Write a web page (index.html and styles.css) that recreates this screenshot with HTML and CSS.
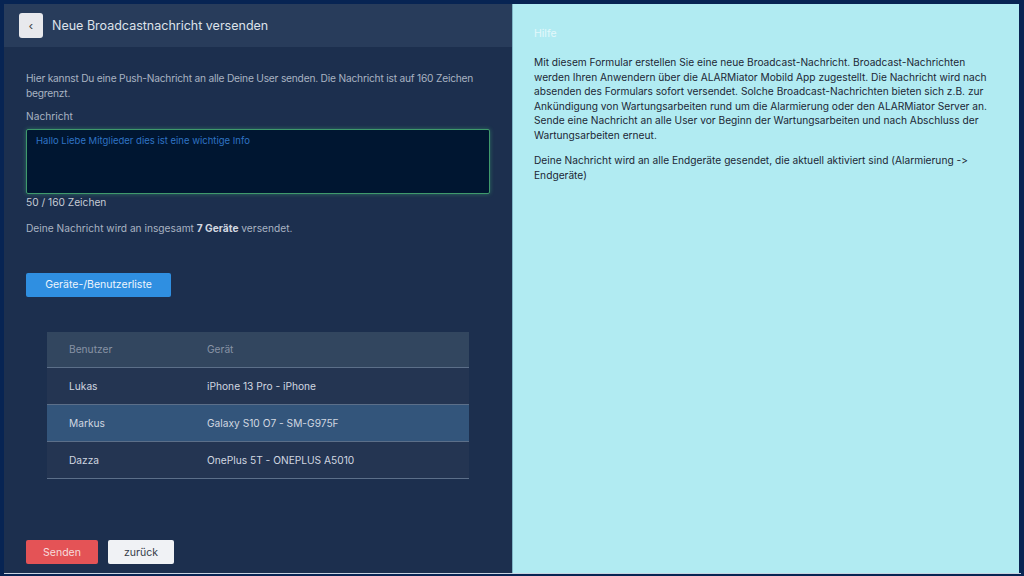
FILE: index.html
```html
<!DOCTYPE html>
<html lang="de">
<head>
    <meta charset="UTF-8">
    <meta name="viewport" content="width=device-width, initial-scale=1.0">
    <title>Broadcastnachricht</title>
    <link rel="stylesheet" href="styles.css">
</head>
<body>
    <div class="frame">
        <div class="main">
            <div class="header">
                <button class="back-btn" type="button">&lsaquo;</button>
                <h1>Neue Broadcastnachricht versenden</h1>
            </div>
            <div class="content">
                <p class="intro">Hier kannst Du eine Push-Nachricht an alle Deine User senden. Die Nachricht ist auf 160 Zeichen begrenzt.</p>
                <label class="field-label" for="message">Nachricht</label>
                <textarea id="message" placeholder="Hallo Liebe Mitglieder dies ist eine wichtige Info"></textarea>
                <p class="counter">50 / 160 Zeichen</p>
                <p class="summary">Deine Nachricht wird an insgesamt <b>7 Geräte</b> versendet.</p>
                <button class="btn btn-blue" type="button">Geräte-/Benutzerliste</button>
                <table class="devices">
                    <thead>
                        <tr><th>Benutzer</th><th>Gerät</th></tr>
                    </thead>
                    <tbody>
                        <tr><td>Lukas</td><td>iPhone 13 Pro - iPhone</td></tr>
                        <tr class="active"><td>Markus</td><td>Galaxy S10 O7 - SM-G975F</td></tr>
                        <tr><td>Dazza</td><td>OnePlus 5T - ONEPLUS A5010</td></tr>
                    </tbody>
                </table>
                <div class="actions">
                    <button class="btn btn-red" type="button">Senden</button>
                    <button class="btn btn-light" type="button">zurück</button>
                </div>
            </div>
        </div>
        <div class="help">
            <h2>Hilfe</h2>
            <p>Mit diesem Formular erstellen Sie eine neue Broadcast-Nachricht. Broadcast-Nachrichten werden Ihren Anwendern über die ALARMiator Mobild App zugestellt. Die Nachricht wird nach absenden des Formulars sofort versendet. Solche Broadcast-Nachrichten bieten sich z.B. zur Ankündigung von Wartungsarbeiten rund um die Alarmierung oder den ALARMiator Server an. Sende eine Nachricht an alle User vor Beginn der Wartungsarbeiten und nach Abschluss der Wartungsarbeiten erneut.</p>
            <p>Deine Nachricht wird an alle Endgeräte gesendet, die aktuell aktiviert sind (Alarmierung -&gt; Endgeräte)</p>
        </div>
    </div>
</body>
</html>
```

FILE: styles.css
```css
* {
    margin: 0;
    padding: 0;
    box-sizing: border-box;
}
html, body {
    height: 100%;
}
body {
    font-family: Inter, "Open Sans", Arial, sans-serif;
    font-feature-settings: "calt" 0;
    font-size: 10.2px;
    line-height: 1.43;
    background-color: #072453;
    padding: 4px 3px 2px 4px;
    overflow: hidden;
}
.frame {
    display: flex;
    height: 100%;
    border-bottom: 1px solid #c9d3e0;
}
.main {
    width: 508px;
    background-color: #1c2f4e;
    color: #a9b3c2;
}
.header {
    display: flex;
    align-items: center;
    gap: 9px;
    height: 43px;
    padding: 0 15px;
    background-color: #283c5b;
}
.back-btn {
    width: 24px;
    height: 25px;
    border: none;
    border-radius: 3px;
    background-color: #e8e9ed;
    color: #444;
    font-size: 13px;
    line-height: 1;
}
.header h1 {
    font-size: 12.5px;
    font-weight: 400;
    color: #dde2ea;
}
.content {
    padding: 24px 22px 0;
    display: flex;
    flex-direction: column;
    align-items: flex-start;
}
.intro {
    letter-spacing: -0.2px;
}
.field-label {
    margin-top: 9px;
}
textarea {
    margin-top: 5px;
    width: 100%;
    height: 65px;
    resize: none;
    background-color: #001631;
    border: 1px solid #3f9a6c;
    border-radius: 2px;
    box-shadow: 0 0 4px rgba(70, 190, 120, 0.45);
    padding: 5px 9px;
    font-family: inherit;
    font-size: 9.5px;
}
textarea::placeholder {
    color: #2f73c4;
}
.counter {
    margin-top: 1px;
    color: #c6ccd5;
}
.summary {
    margin-top: 12px;
}
.summary b {
    color: #d3d8e0;
}
.btn {
    height: 24px;
    border: none;
    border-radius: 2px;
    font-family: inherit;
    font-size: 10.5px;
    padding: 0 16px;
}
.btn-blue {
    margin-top: 37px;
    width: 145px;
    background-color: #2f8fe1;
    color: #eef5fd;
}
.devices {
    margin: 35px 21px 0;
    width: 422px;
    border-collapse: collapse;
    text-align: left;
}
.devices th {
    height: 36px;
    background-color: #32465f;
    color: #8893a5;
    font-weight: 400;
}
.devices td {
    height: 37px;
    background-color: #243552;
    color: #d1d7e0;
    border-top: 1px solid #5c6f89;
}
.devices tbody tr:last-child td {
    border-bottom: 1px solid #5c6f89;
}
.devices tr.active td {
    background-color: #33557b;
}
.devices th:first-child, .devices td:first-child {
    padding-left: 22px;
    width: 160px;
}
.actions {
    margin-top: 61px;
    display: flex;
    gap: 10px;
}
.btn-red {
    background-color: #e45356;
    color: #f7dcdc;
    width: 72px;
}
.btn-light {
    background-color: #f0f2f5;
    color: #333b47;
    width: 66px;
}
.help {
    flex: 1;
    background-color: #b1ebf2;
    border-left: 1px solid #7fb6c6;
    border-right: 2px solid #072453;
    padding: 22px 21px 0;
    color: #1c2735;
}
.help h2 {
    font-size: 10.5px;
    font-weight: 400;
    color: #e3f8fb;
}
.help p {
    margin-top: 11px;
}
.help h2 + p {
    margin-top: 14px;
}
```
